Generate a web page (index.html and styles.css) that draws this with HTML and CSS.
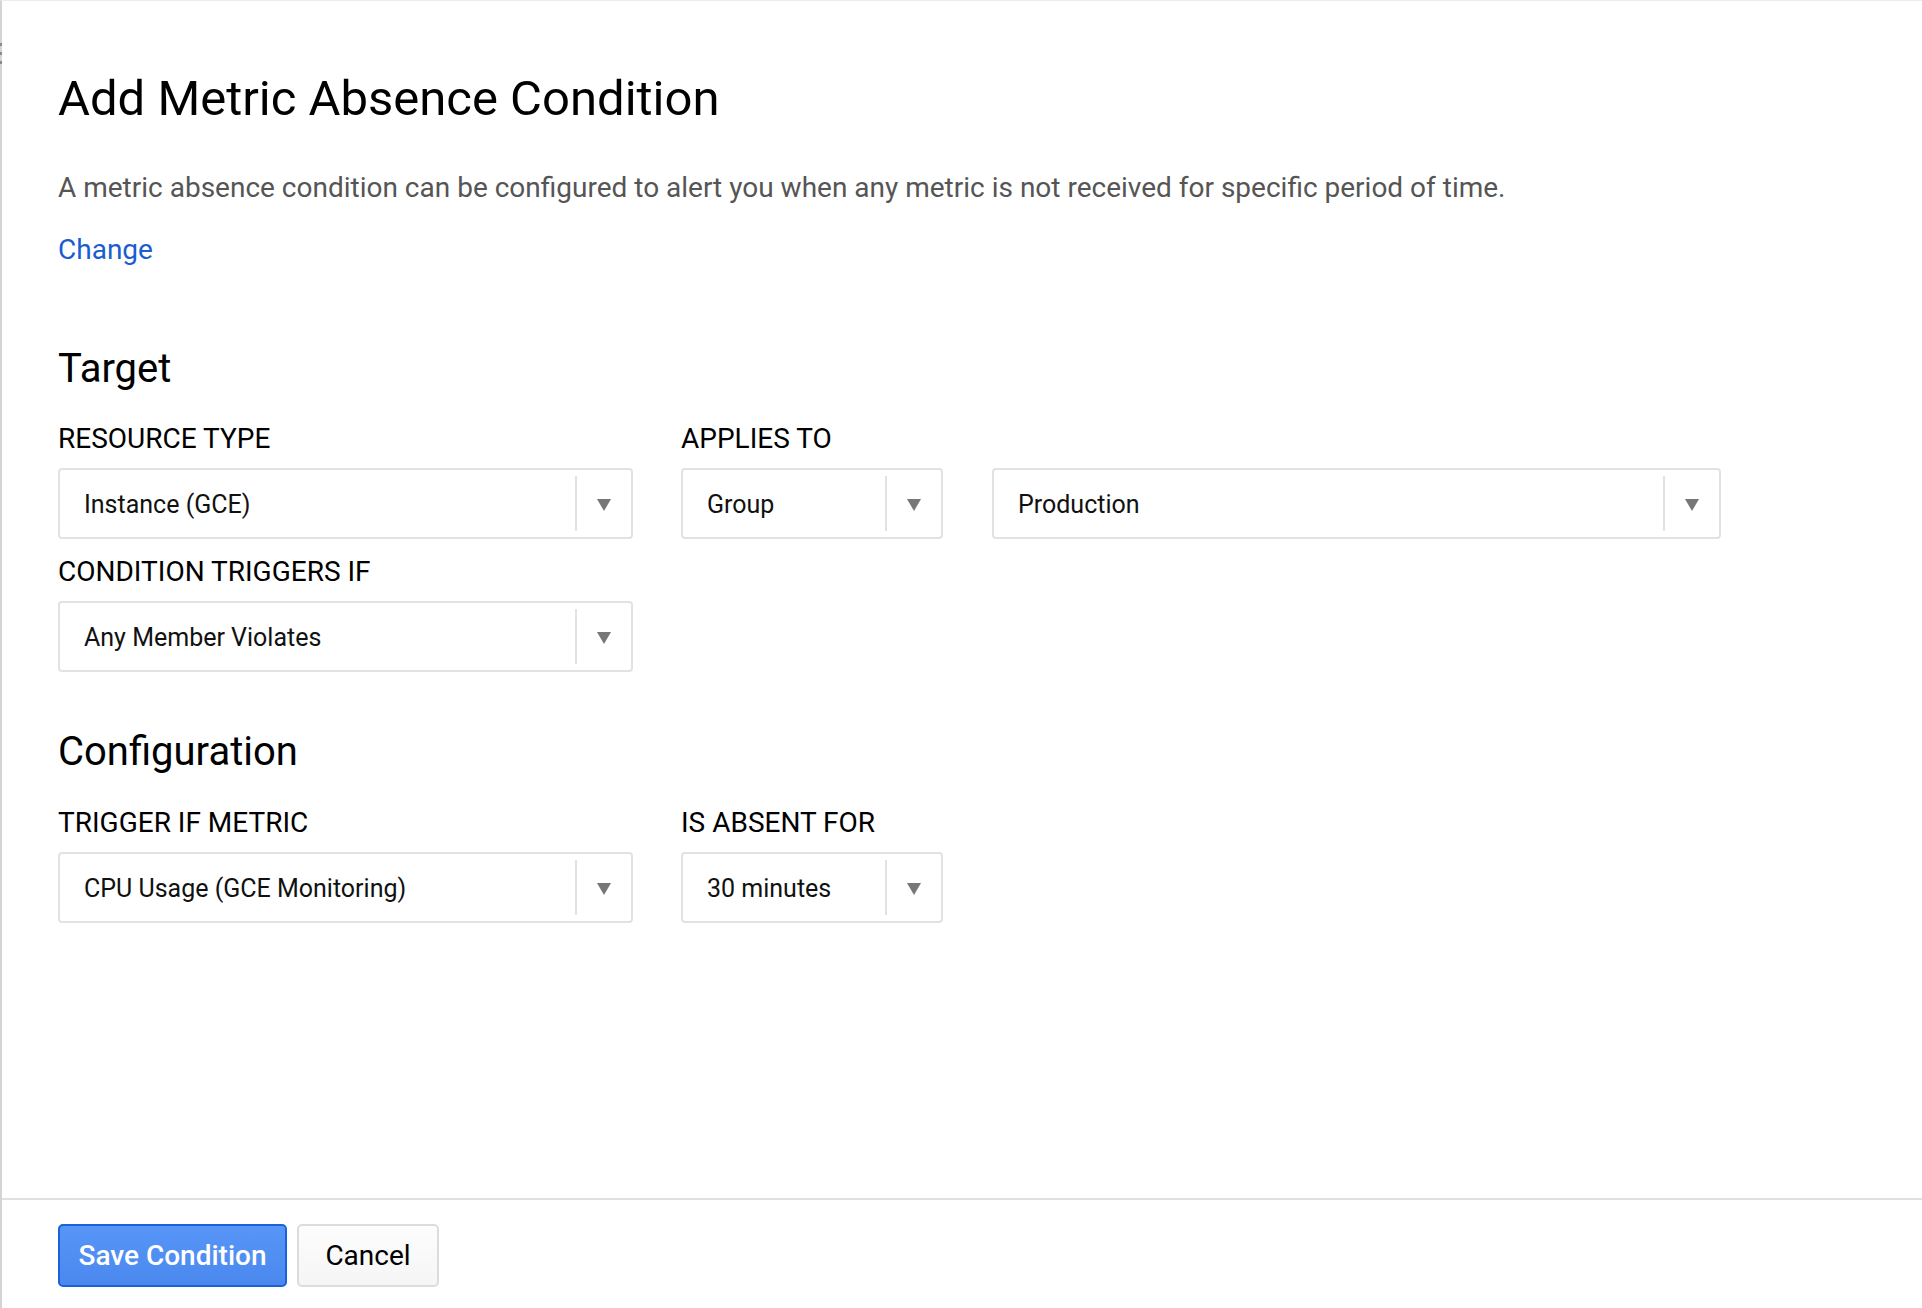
FILE: index.html
```html
<!DOCTYPE html>
<html lang="en">
<head>
<meta charset="utf-8">
<title>Add Metric Absence Condition</title>
<link rel="stylesheet" href="styles.css">
</head>
<body>
<div class="page">
  <span class="handle"><i></i><i></i><i></i></span>
  <main class="content">
    <h1 class="title">Add Metric Absence Condition</h1>
    <p class="desc">A metric absence condition can be configured to alert you when any metric is not received for specific period of time.</p>
    <a class="link" href="#">Change</a>

    <h2 class="section">Target</h2>
    <div class="row">
      <div class="field col-main">
        <div class="label">RESOURCE TYPE</div>
        <div class="select">
          <span class="value">Instance (GCE)</span>
          <span class="arrow"><svg width="14" height="12" viewBox="0 0 14 12"><polygon points="0,0 14,0 7,12" fill="#777"/></svg></span>
        </div>
      </div>
      <div class="field">
        <div class="label">APPLIES TO</div>
        <div class="pair">
          <div class="select col-small">
            <span class="value">Group</span>
            <span class="arrow"><svg width="14" height="12" viewBox="0 0 14 12"><polygon points="0,0 14,0 7,12" fill="#777"/></svg></span>
          </div>
          <div class="select col-wide">
            <span class="value">Production</span>
            <span class="arrow"><svg width="14" height="12" viewBox="0 0 14 12"><polygon points="0,0 14,0 7,12" fill="#777"/></svg></span>
          </div>
        </div>
      </div>
    </div>
    <div class="field col-main">
      <div class="label label-next">CONDITION TRIGGERS IF</div>
      <div class="select">
        <span class="value">Any Member Violates</span>
        <span class="arrow"><svg width="14" height="12" viewBox="0 0 14 12"><polygon points="0,0 14,0 7,12" fill="#777"/></svg></span>
      </div>
    </div>

    <h2 class="section section-config">Configuration</h2>
    <div class="row">
      <div class="field col-main">
        <div class="label label-config">TRIGGER IF METRIC</div>
        <div class="select">
          <span class="value">CPU Usage (GCE Monitoring)</span>
          <span class="arrow"><svg width="14" height="12" viewBox="0 0 14 12"><polygon points="0,0 14,0 7,12" fill="#777"/></svg></span>
        </div>
      </div>
      <div class="field">
        <div class="label label-config">IS ABSENT FOR</div>
        <div class="select col-small">
          <span class="value">30 minutes</span>
          <span class="arrow"><svg width="14" height="12" viewBox="0 0 14 12"><polygon points="0,0 14,0 7,12" fill="#777"/></svg></span>
        </div>
      </div>
    </div>
  </main>
  <footer class="footer">
    <button class="btn btn-primary" type="button">Save Condition</button>
    <button class="btn btn-default" type="button">Cancel</button>
  </footer>
</div>
</body>
</html>
```

FILE: styles.css
```css
html, body {
  margin: 0;
  padding: 0;
  background: #fff;
}

body {
  font-family: Roboto, "Liberation Sans", Arial, sans-serif;
  color: #212121;
}

.page {
  position: relative;
  box-sizing: border-box;
  height: 1308px;
  display: flex;
  flex-direction: column;
  border-top: 1px solid #ececec;
  border-left: 2px solid #d4d4d4;
}

.handle {
  position: absolute;
  left: -2px;
  top: 42px;
  display: flex;
  flex-direction: column;
  gap: 6px;
}

.handle i {
  display: block;
  width: 2px;
  height: 3px;
  background: #8a8a8a;
}

.content {
  flex: 1;
  padding: 70px 0 0 56px;
}

.title {
  margin: 0;
  font-size: 49px;
  line-height: 56px;
  font-weight: 400;
  color: #000;
}

.desc {
  margin: 43px 0 0;
  font-size: 28px;
  line-height: 36px;
  color: #555;
}

.link {
  display: inline-block;
  margin-top: 26px;
  font-size: 28px;
  line-height: 36px;
  color: #1a5dce;
  text-decoration: none;
}

.section {
  margin: 78px 0 0;
  font-size: 40px;
  line-height: 46px;
  font-weight: 400;
  color: #000;
}

.section-config {
  margin-top: 57px;
}

.row {
  display: flex;
  gap: 48px;
}

.field {
  display: flex;
  flex-direction: column;
}

.col-main {
  width: 575px;
}

.label {
  margin-top: 29px;
  margin-bottom: 11px;
  font-size: 28px;
  line-height: 36px;
  color: #000;
}

.label-next {
  margin-top: 15px;
}

.label-config {
  margin-top: 30px;
}

.pair {
  display: flex;
  gap: 49px;
}

.select {
  box-sizing: border-box;
  height: 71px;
  display: flex;
  align-items: stretch;
  border: 2px solid #e2e2e2;
  border-radius: 4px;
  background: #fff;
}

.col-small {
  width: 262px;
}

.col-wide {
  width: 729px;
}

.value {
  flex: 1;
  display: flex;
  align-items: center;
  padding: 2px 0 0 24px;
  font-size: 25px;
  color: #111;
  white-space: nowrap;
}

.arrow {
  width: 54px;
  margin: 6px 0;
  display: flex;
  align-items: center;
  justify-content: center;
  border-left: 2px solid #e2e2e2;
}

.arrow svg {
  display: block;
  margin-top: 3px;
}

.footer {
  display: flex;
  gap: 10px;
  padding: 24px 0 21px 56px;
  border-top: 2px solid #e0e0e0;
}

.btn {
  box-sizing: border-box;
  height: 63px;
  margin: 0;
  border-radius: 5px;
  font-family: Roboto, "Liberation Sans", Arial, sans-serif;
  font-size: 28px;
  cursor: pointer;
}

.btn-primary {
  width: 229px;
  padding: 0;
  border: 2px solid #1a62dc;
  background: linear-gradient(#5796f7, #4a88ee);
  color: #fff;
  font-weight: 500;
}

.btn-default {
  width: 142px;
  padding: 0;
  border: 2px solid #dcdcdc;
  background: linear-gradient(#fdfdfd, #f5f5f5);
  color: #000;
  font-weight: 400;
}
```
